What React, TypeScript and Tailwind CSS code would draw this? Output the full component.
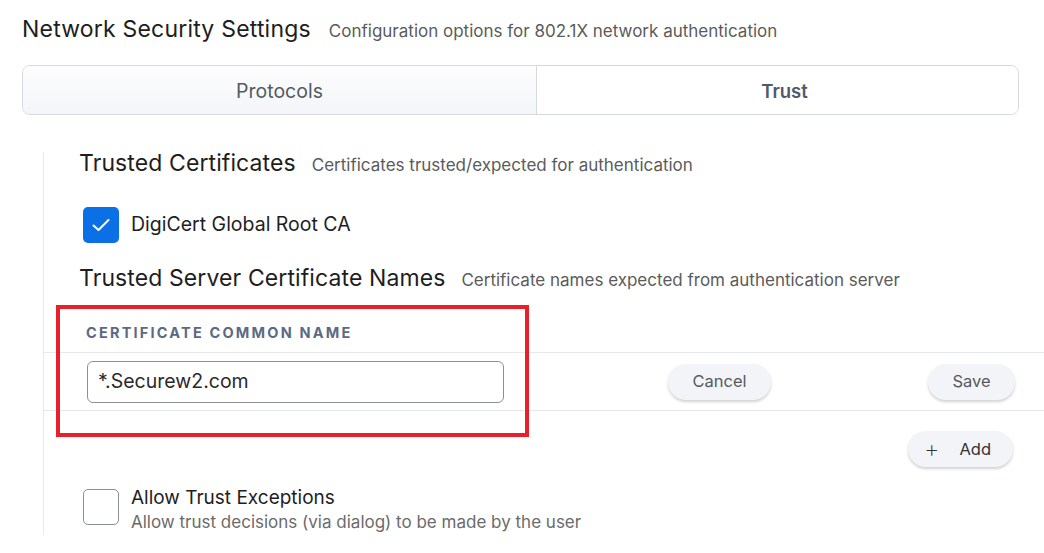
import React from "react";

export default function App() {
  return (
    <div className="w-[1044px] h-[553px] overflow-hidden bg-white text-[#222]" style={{ fontFamily: "Inter, 'Open Sans', sans-serif" }}>
      <div className="pl-[22px] pr-[25px]">
        <div className="flex items-baseline h-[30px] pt-[14px] box-content">
          <h1 className="text-[23px] tracking-[0.2px] leading-[30px] text-[#1e1e1e] font-normal">Network Security Settings</h1>
          <span className="ml-[18px] text-[17px] text-[#5b5b5b]">Configuration options for 802.1X network authentication</span>
        </div>
        <div className="mt-[21px] flex h-[50px] rounded-[8px] border border-[#d6d9de] overflow-hidden">
          <div className="w-[514px] flex items-center justify-center pt-[3px] bg-gradient-to-b from-[#fdfdfe] to-[#f3f5f8] text-[19.5px] text-[#555a60] border-r border-[#d6d9de]">
            Protocols
          </div>
          <div className="flex-1 flex items-center justify-center pl-[14px] pt-[3px] bg-white text-[18.5px] font-semibold text-[#4f5a6b]">
            Trust
          </div>
        </div>
      </div>

      <div className="relative mt-[37px] ml-[43px] border-l border-[#e6e8eb] h-[383px]">
        <div className="pl-[35px] pt-[0px] flex items-baseline h-[24px]">
          <h2 className="text-[23px] tracking-[0.1px] leading-[22px] text-[#1e1e1e]">Trusted Certificates</h2>
          <span className="ml-[16px] text-[17px] text-[#5b5b5b]">Certificates trusted/expected for authentication</span>
        </div>
        <div className="pl-[39px] mt-[31px] flex items-center h-[36px]">
          <div className="w-[36px] h-[36px] rounded-[5px] bg-[#0b6fe6] flex items-center justify-center">
            <svg width="22" height="22" viewBox="0 0 22 22" fill="none">
              <path d="M3.5 11.5 L8.5 16 L18.5 6" stroke="white" strokeWidth="2" strokeLinecap="round" strokeLinejoin="round" />
            </svg>
          </div>
          <span className="ml-[12px] text-[19.5px] text-[#1e1e1e]">DigiCert Global Root CA</span>
        </div>
        <div className="pl-[35px] mt-[24px] flex items-baseline h-[24px]">
          <h2 className="text-[23px] tracking-[0.1px] leading-[22px] text-[#1e1e1e]">Trusted Server Certificate Names</h2>
          <span className="ml-[16px] text-[17px] text-[#5b5b5b]">Certificate names expected from authentication server</span>
        </div>
        <div className="pl-[42px] mt-[29px] h-[26px] flex items-center">
          <span className="text-[14.5px] font-bold tracking-[2.2px] text-[#5b6a83]">CERTIFICATE COMMON NAME</span>
        </div>
        <div className="mt-[6px] border-t border-b border-[#e6e8eb] h-[59px] flex items-center">
          <div className="pl-[43px] w-[460px]">
            <div className="w-[417px] h-[42px] rounded-[6px] border border-[#8b9097] flex items-center pl-[10px] text-[19.5px] text-[#2a2a2a]">
              *.Securew2.com
            </div>
          </div>
          <div className="flex-1 flex items-center">
            <button className="ml-[164px] w-[103px] h-[36px] rounded-full bg-[#f3f4f7] shadow-[0_2px_3px_rgba(0,0,0,0.18)] text-[16.5px] text-[#555a60]">Cancel</button>
            <button className="ml-[157px] w-[87px] h-[36px] rounded-full bg-[#f3f4f7] shadow-[0_2px_3px_rgba(0,0,0,0.18)] text-[16.5px] text-[#555a60]">Save</button>
          </div>
        </div>
        <div className="mt-[20px] flex justify-end pr-[31px]">
          <button className="w-[105px] h-[36px] rounded-full bg-[#f3f4f7] shadow-[0_2px_3px_rgba(0,0,0,0.18)] text-[16.5px] text-[#333] flex items-center pl-[16px]">
            <span className="text-[24px] leading-none font-extralight">+</span>
            <span className="ml-[20px]">Add</span>
          </button>
        </div>
        <div className="pl-[39px] mt-[22px] flex items-start">
          <div className="w-[36px] h-[36px] rounded-[5px] border border-[#8b9097] bg-white" />
          <div className="ml-[12px] -mt-[3px]">
            <div className="text-[19px] leading-[24px] text-[#1e1e1e]">Allow Trust Exceptions</div>
            <div className="text-[17px] leading-[24px] text-[#6b6b6b]">Allow trust decisions (via dialog) to be made by the user</div>
          </div>
        </div>
        <div className="absolute left-[12px] top-[153px] w-[473px] h-[132px] border-[4px] border-[#e8202a] pointer-events-none" />
      </div>
    </div>
  );
}
